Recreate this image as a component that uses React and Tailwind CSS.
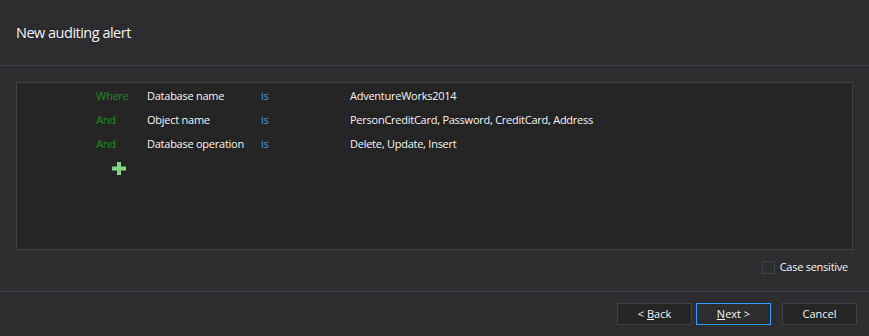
export default function App() {
  const rows = [
    ["Where", "Database name", "AdventureWorks2014"],
    ["And", "Object name", "PersonCreditCard, Password, CreditCard, Address"],
    ["And", "Database operation", "Delete, Update, Insert"],
  ];
  return (
    <div className="w-[869px] h-[336px] bg-[#2d2d30] text-[#f1f1f1] flex flex-col" style={{ fontFamily: '"Open Sans", "Noto Sans", sans-serif' }}>
      <div className="h-[66px] border-b border-[#3f3f46] flex items-center px-4 shrink-0">
        <span className="text-[14.5px] tracking-[-0.5px]">New auditing alert</span>
      </div>
      <div className="flex-1 flex flex-col px-4 pt-4">
        <div className="h-[168px] border border-[#3f3f46] bg-[#252526] pt-[1px] text-[11px] tracking-[-0.25px]">
          {rows.map((r, i) => (
            <div key={i} className="h-6 flex items-center">
              <span className="w-[130px] pl-[79px] text-[#1f8a1f]">{r[0]}</span>
              <span className="w-[114px]">{r[1]}</span>
              <span className="w-[89px] text-[#3c9ae8]">is</span>
              <span>{r[2]}</span>
            </div>
          ))}
          <div className="pl-[95px] pt-[6px]">
            <svg width="14" height="13" viewBox="0 0 14 13" className="block">
              <path d="M5 0h4v4.5h5v4H9V13H5V8.5H0v-4h5z" fill="#86cf86" />
            </svg>
          </div>
        </div>
        <div className="flex justify-end items-center mt-[9px] pr-[5px] gap-[5px] text-[11px] tracking-[-0.25px]">
          <div className="w-[13px] h-[13px] border border-[#3f3f46] bg-[#2d2d30]" />
          <span>Case sensitive</span>
        </div>
      </div>
      <div className="h-[45px] border-t border-[#3f3f46] flex items-start justify-end pt-[11px] pr-[12px] text-[11px] shrink-0">
        <button className="w-[75px] h-[22px] border border-[#3f3f46] bg-[#252526] flex items-center justify-center"><span>&lt;&nbsp;<u>B</u>ack</span></button>
        <button className="w-[75px] h-[22px] ml-[4px] border border-[#3399ff] bg-[#2d2d30] flex items-center justify-center"><span><u>N</u>ext &gt;</span></button>
        <button className="w-[75px] h-[22px] ml-[11px] border border-[#3f3f46] bg-[#252526] flex items-center justify-center">Cancel</button>
      </div>
    </div>
  );
}
